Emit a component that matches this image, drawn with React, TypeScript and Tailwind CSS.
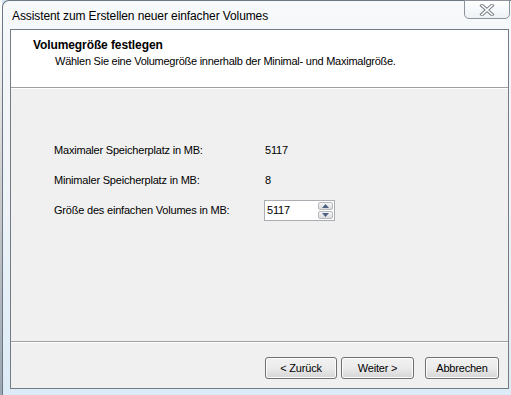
import React from "react";

const font = { fontFamily: '"Liberation Sans", Arial, sans-serif' };

function Btn({ children, w }: { children: React.ReactNode; w: string }) {
  return (
    <div
      className={`${w} h-[22px] flex items-center justify-center rounded-[3px] border border-[#707070] bg-gradient-to-b from-[#f2f2f2] via-[#ebebeb] to-[#d5d5d5] text-[11px] tracking-[-0.2px] text-black shadow-[inset_0_0_0_1px_#fcfcfc]`}
    >
      {children}
    </div>
  );
}

export default function App() {
  return (
    <div className="w-[511px] h-[395px] overflow-hidden bg-[#d6e6f2] flex" style={font}>
      <div className="w-[2px] bg-gradient-to-b from-[#ffffff] via-[#c9c9c9] to-[#9aa6b0]" />
      <div className="flex-1 flex flex-col rounded-tl-[7px] border-l border-t border-[#6b7784] bg-gradient-to-b from-[#f7f9fb] via-[#eef3f7] to-[#dcebf7]">
        <div className="h-[28px] flex items-start justify-between">
          <div className="pt-[6px] pl-[9px] text-[12px] text-black tracking-[-0.1px]">
            Assistent zum Erstellen neuer einfacher Volumes
          </div>
          <div className="w-[46px] h-[19px] mr-[1px] -mt-px rounded-b-[5px] border border-[#8d949c] bg-gradient-to-b from-[#ffffff] to-[#eef2f6] flex items-center justify-center">
            <svg width="16" height="12" viewBox="0 0 16 12">
              <path d="M3 1.5 L13 10.5 M13 1.5 L3 10.5" stroke="#7a7f86" strokeWidth="3.6" strokeLinecap="square" />
              <path d="M3 1.5 L13 10.5 M13 1.5 L3 10.5" stroke="#ffffff" strokeWidth="1.6" strokeLinecap="square" />
            </svg>
          </div>
        </div>
        <div className="ml-[7px] mr-[2px] border border-[#737b85] flex flex-col h-[360px]">
          <div className="h-[58px] bg-white border-b border-[#a0a0a0] pl-[22px] pt-[8px]">
            <div className="text-[12px] font-bold text-black leading-[15px] tracking-[-0.1px]">Volumegröße festlegen</div>
            <div className="pl-[22px] text-[11px] tracking-[-0.25px] text-black leading-[16px]">
              Wählen Sie eine Volumegröße innerhalb der Minimal- und Maximalgröße.
            </div>
          </div>
          <div className="h-[254px] bg-[#f0f0f0] border-t border-white border-b border-b-[#a0a0a0] pl-[43px] pt-[51px] flex flex-col text-[11px] tracking-[-0.2px] text-black">
            <div className="flex items-center h-[20px]">
              <div className="w-[211px]">Maximaler Speicherplatz in MB:</div>
              <div>5117</div>
            </div>
            <div className="flex items-center h-[20px] mt-[10px]">
              <div className="w-[211px]">Minimaler Speicherplatz in MB:</div>
              <div>8</div>
            </div>
            <div className="flex items-center h-[21px] mt-[10px]">
              <div className="w-[210px]">Größe des einfachen Volumes in MB:</div>
              <div className="flex h-[21px] border border-[#abadb3] bg-white">
                <div className="w-[52px] pl-[2px] flex items-center">5117</div>
                <div className="w-[17px] flex flex-col gap-[1px] p-[1px] bg-white">
                  <div className="flex-1 border border-[#b6b9be] rounded-[2px] bg-gradient-to-b from-[#f6f6f6] to-[#dcdcdc] flex items-center justify-center">
                    <svg width="7" height="4" viewBox="0 0 7 4"><path d="M0 4 L3.5 0 L7 4 Z" fill="#4d6185" /></svg>
                  </div>
                  <div className="flex-1 border border-[#b6b9be] rounded-[2px] bg-gradient-to-b from-[#f6f6f6] to-[#dcdcdc] flex items-center justify-center">
                    <svg width="7" height="4" viewBox="0 0 7 4"><path d="M0 0 L3.5 4 L7 0 Z" fill="#4d6185" /></svg>
                  </div>
                </div>
              </div>
            </div>
          </div>
          <div className="flex-1 bg-[#f0f0f0] border-t border-white flex items-start pt-[14px] pl-[254px]">
            <Btn w="w-[72px]">&lt; Zurück</Btn>
            <div className="w-[4px]" />
            <Btn w="w-[73px]">Weiter &gt;</Btn>
            <div className="w-[11px]" />
            <Btn w="w-[74px]">Abbrechen</Btn>
          </div>
        </div>
      </div>
    </div>
  );
}
